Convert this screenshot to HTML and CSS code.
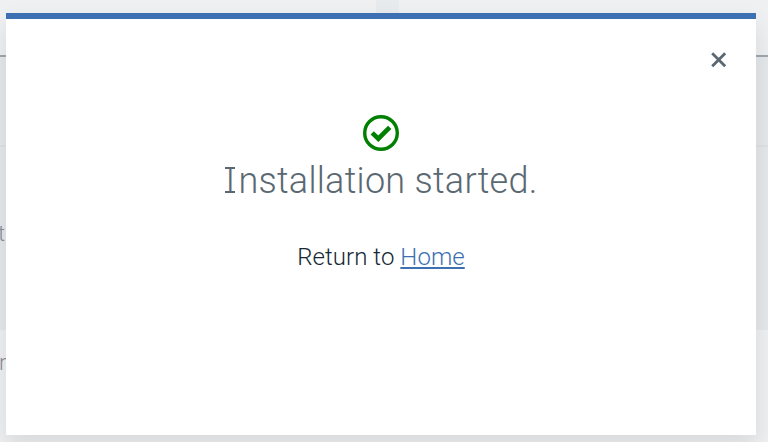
FILE: index.html
```
<!DOCTYPE html>
<html lang="en">
<head>
<meta charset="utf-8">
<title>Installation</title>
<link rel="stylesheet" href="styles.css">
</head>
<body>
<div class="page">
  <div class="page-head"><div class="tab"></div></div>
  <div class="row row-one"></div>
  <div class="row row-two">t</div>
  <div class="row row-three">r</div>
</div>
<main class="modal" role="dialog">
  <button class="close" aria-label="Close">
    <svg viewBox="0 0 16 16" width="16" height="16"><path d="M1.2 1.2 14.2 14.2M14.2 1.2 1.2 14.2"/></svg>
  </button>
  <svg class="check" viewBox="0 0 36 36" width="36" height="36"><circle cx="18" cy="18" r="16.3"/><path d="M9.2 17.8 15.3 23.7 26.7 12.3"/></svg>
  <h1><span class="slab">I</span>nstallation started.</h1>
  <p>Return to <a href="#">Home</a></p>
</main>
</body>
</html>
```
FILE: styles.css
```
* { box-sizing: border-box; }
body {
  margin: 0;
  height: 442px;
  overflow: hidden;
  position: relative;
  background: #f0f1f2;
  font-family: Roboto, "Open Sans", sans-serif;
  font-weight: 300;
}
.page { color: #8b8e98; font-size: 22px; line-height: 26px; }
.page-head {
  height: 57px;
  border-bottom: 2px solid #a1a7af;
  background: #eff0f1;
}
.tab { width: 23px; height: 55px; margin-left: 376px; background: #e7ebee; }
.row { background: #e5e9ec; }
.row-one { height: 90px; border-bottom: 2px solid #dfe2e5; }
.row-two { height: 183px; padding-top: 74px; text-indent: -2px; }
.row-three { height: 112px; padding-top: 20px; background: #eff0f1; text-indent: -1px; }
.modal {
  position: absolute;
  top: 13px;
  left: 6px;
  width: 750px;
  height: 422px;
  display: flex;
  flex-direction: column;
  align-items: center;
  border-top: 6px solid #3d70b2;
  background: #fff;
  box-shadow: 0 12px 24px rgba(0, 0, 0, .1);
}
.close {
  align-self: flex-end;
  width: 16px;
  height: 16px;
  margin: 33px 29px 0 0;
  padding: 0;
  border: 0;
  background: none;
}
.close svg { display: block; fill: none; stroke: #5a6872; stroke-width: 2.8; }
.check { margin-top: 47px; fill: none; stroke: #008000; stroke-width: 3.4; }
.check path { stroke-width: 4.6; }
h1 {
  margin: 8px 0 0;
  color: #5a6872;
  font-size: 36px;
  line-height: 44px;
  font-weight: 300;
  letter-spacing: .27px;
  white-space: nowrap;
}
.slab {
  display: inline-block;
  width: 14px;
  height: 26px;
  line-height: 28px;
  letter-spacing: 0;
  text-indent: 1px;
  background:
    linear-gradient(#5a6872, #5a6872) 1px 0 / 10px 2px no-repeat,
    linear-gradient(#5a6872, #5a6872) 1px 24px / 10px 2px no-repeat;
}
p {
  margin: 38px 0 0;
  color: #152934;
  font-size: 24px;
  line-height: 32px;
  letter-spacing: .06px;
  white-space: nowrap;
}
a {
  color: #3d70b2;
  text-decoration: underline;
  text-decoration-thickness: 2px;
  text-underline-offset: 2px;
}
```
